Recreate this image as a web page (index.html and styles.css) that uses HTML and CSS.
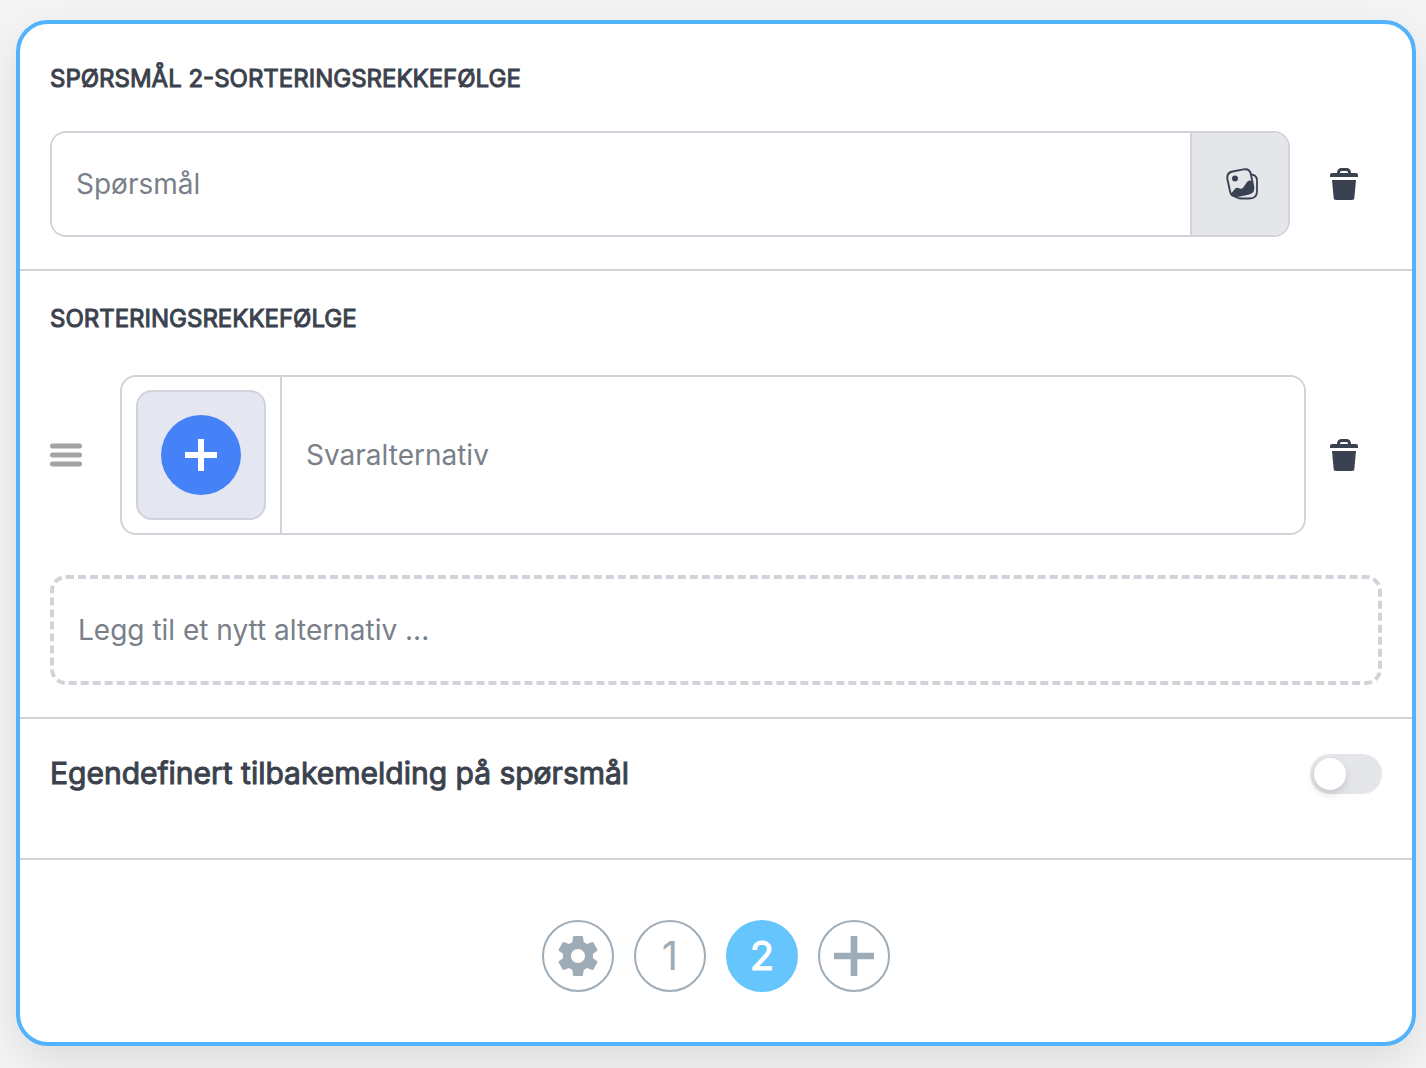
FILE: index.html
```html
<!DOCTYPE html>
<html lang="nb">
<head>
<meta charset="utf-8">
<meta name="viewport" content="width=device-width, initial-scale=1">
<title>Sorteringsrekkefølge</title>
<link rel="stylesheet" href="styles.css">
</head>
<body>
<svg class="sprite" aria-hidden="true">
  <symbol id="trash" viewBox="0 0 32 32">
    <path d="M10.500 6V4.500a3 3 0 0 1 3-3h5a3 3 0 0 1 3 3V6" fill="none" stroke="currentColor" stroke-width="3"/>
    <path d="M4 5h24a2 2 0 0 1 2 2v2H2V7a2 2 0 0 1 2-2zM4 12h24l-1.600 17.500a2.500 2.500 0 0 1-2.500 2.500H8.100a2.500 2.500 0 0 1-2.500-2.500z" fill="currentColor"/>
  </symbol>
</svg>
<main class="card">
  <section class="section section-question">
    <h2 class="heading"><label for="question">SPØRSMÅL 2-SORTERINGSREKKEFØLGE</label></h2>
    <div class="row question-row">
      <div class="group">
        <input class="field" id="question" type="text" placeholder="Spørsmål">
        <button class="media-button" type="button" aria-label="Legg til bilde">
          <svg class="icon" viewBox="0 0 32 32" aria-hidden="true">
            <path d="M25.500 6.500c3.500.5 5.500 2.500 5.500 6V23c0 5-2.500 7.500-7.500 7.500H15c-3 0-5-.8-6.500-2.500" fill="none" stroke="currentColor" stroke-width="1.800"/>
            <path d="M6.500 3.500 17.500 1.400c4.200-.8 6.600.8 7.400 4.900l2.300 12c.8 4.200-.8 6.700-4.900 7.500L11.500 28.100c-4.200.8-6.700-.8-7.500-4.900L1.500 11.500c-.8-4.300.8-7.200 5-8z" fill="none" stroke="currentColor" stroke-width="1.900"/>
            <circle cx="9" cy="10.500" r="3" fill="currentColor"/>
            <path d="M4.500 26.300 9.300 20.600c.9-1 2-1.200 3-.6l2.200.7c1 .2 1.800-.1 2.500-.9l4.500-6.200c1.200-1.600 3.500-1.600 5 0l1.200 5.500c.4 3-1 5.500-4 6.300l-13.500 2.800c-2.200.4-4.300-.2-5.700-1.900z" fill="currentColor"/>
          </svg>
        </button>
      </div>
      <button class="trash-button" type="button" aria-label="Slett spørsmål"><svg class="icon"><use href="#trash"/></svg></button>
    </div>
  </section>

  <section class="section section-answers">
    <h2 class="heading">SORTERINGSREKKEFØLGE</h2>
    <div class="row answer-row">
      <button class="handle" type="button" aria-label="Flytt">
        <svg class="icon" viewBox="0 0 32 32" aria-hidden="true"><path d="M2.500 7h27M2.500 16h27M2.500 25h27" stroke="currentColor" stroke-width="5" stroke-linecap="round"/></svg>
      </button>
      <div class="group">
        <div class="thumb-cell">
          <button class="thumb" type="button" aria-label="Legg til bilde">
            <span class="thumb-circle"><svg class="icon" viewBox="0 0 32 32"><path d="M0 16h32M16 0v32" stroke="currentColor" stroke-width="6"/></svg></span>
          </button>
        </div>
        <input class="field" type="text" placeholder="Svaralternativ" aria-label="Svaralternativ">
      </div>
      <button class="trash-button" type="button" aria-label="Slett alternativ"><svg class="icon"><use href="#trash"/></svg></button>
    </div>
    <input class="field field-new" type="text" placeholder="Legg til et nytt alternativ ..." aria-label="Legg til et nytt alternativ">
  </section>

  <section class="section section-feedback">
    <label class="feedback-label" for="feedback">Egendefinert tilbakemelding på spørsmål</label>
    <input class="toggle" id="feedback" type="checkbox" role="switch">
  </section>

  <nav class="pager" aria-label="Spørsmål">
    <button class="page" type="button" aria-label="Innstillinger">
      <svg class="page-icon" viewBox="2 2 20 20" aria-hidden="true"><path fill="currentColor" d="M19.430 12.980c.04-.32.07-.64.07-.98s-.03-.66-.07-.98l2.110-1.650c.19-.15.24-.42.12-.64l-2-3.460c-.12-.22-.39-.3-.61-.22l-2.490 1c-.52-.4-1.080-.73-1.690-.98l-.38-2.650C14.460 2.180 14.250 2 14 2h-4c-.25 0-.46.18-.49.42l-.38 2.650c-.61.25-1.170.59-1.690.98l-2.490-1c-.23-.09-.49 0-.61.22l-2 3.460c-.13.22-.07.49.12.64l2.110 1.650c-.04.32-.07.65-.07.98s.03.66.07.98l-2.110 1.650c-.19.15-.24.42-.12.64l2 3.460c.12.22.39.3.61.22l2.490-1c.52.4 1.080.73 1.690.98l.38 2.650c.03.24.24.42.49.42h4c.25 0 .46-.18.49-.42l.38-2.650c.61-.25 1.170-.59 1.690-.98l2.490 1c.23.09.49 0 .61-.22l2-3.460c.12-.22.07-.49-.12-.64l-2.110-1.650zM12 15.500c-1.930 0-3.500-1.570-3.500-3.500s1.570-3.500 3.500-3.500 3.500 1.570 3.500 3.500-1.570 3.500-3.500 3.500z"/></svg>
    </button>
    <button class="page page-number" type="button">1</button>
    <button class="page page-number page-current" type="button" aria-current="page">2</button>
    <button class="page" type="button" aria-label="Nytt spørsmål">
      <svg class="page-icon" viewBox="0 0 40 40" aria-hidden="true"><path d="M0 20h40M20 0v40" stroke="currentColor" stroke-width="6.600"/></svg>
    </button>
  </nav>
</main>
</body>
</html>
```
FILE: styles.css
```css
* { box-sizing: border-box; }

body {
  margin: 0;
  padding: 20px 10px 22px 16px;
  background: #f5f5f5;
  color: #3b424d;
  font-family: Inter, "Liberation Sans", sans-serif;
  overflow-x: hidden;
}

button {
  display: flex;
  align-items: center;
  justify-content: center;
  flex: none;
  margin: 0;
  padding: 0;
  border: 0;
  background: none;
  color: #3a4252;
  font: inherit;
  cursor: pointer;
}

.sprite { display: none; }

.icon {
  display: block;
  width: 32px;
  height: 32px;
}

.card {
  border: 4px solid #52b2fb;
  border-radius: 32px;
  background: #fff;
  box-shadow: 0 16px 48px rgba(0, 0, 0, 0.11);
}

.section {
  padding: 0 30px 32px;
  border-bottom: 2px solid #d0d4d9;
}

.section-question { padding-top: 37px; }
.section-answers { padding-top: 30px; }

.heading {
  margin: 0;
  font-size: 24px;
  font-weight: 400;
  line-height: 36px;
  -webkit-text-stroke: 1px currentColor;
}

.row {
  display: flex;
  align-items: center;
}

.question-row {
  gap: 16px;
  margin-top: 34px;
}

.answer-row { margin: 38px 0 40px; }

.group {
  display: flex;
  flex: 1;
  min-width: 0;
  overflow: hidden;
  border: 2px solid #d0d3d9;
  border-radius: 16px;
}

.field {
  flex: 1;
  min-width: 0;
  width: 100%;
  height: 102px;
  margin: 0;
  padding: 0 24px;
  border: 0;
  outline: 0;
  background: #fff;
  color: #3b424d;
  font: 400 28px Inter, "Liberation Sans", sans-serif;
}

.field::placeholder {
  color: #7a8089;
  opacity: 1;
}

.answer-row .field { height: 156px; }

.field-new {
  display: block;
  height: 110px;
  border: 4px dashed #d0d3d9;
  border-radius: 16px;
}

.media-button {
  width: 98px;
  padding-left: 4px;
  border-left: 2px solid #d0d3d9;
  background: #e4e6ea;
}

.trash-button {
  width: 76px;
  height: 76px;
}

.handle {
  width: 32px;
  margin-right: 38px;
  color: #a3a3a3;
}

.thumb-cell {
  display: flex;
  align-items: center;
  justify-content: center;
  width: 160px;
  border-right: 2px solid #d0d3d9;
}

.thumb {
  width: 130px;
  height: 130px;
  border: 2px solid #d0d3d9;
  border-radius: 16px;
  background: #e4e7f2;
}

.thumb-circle {
  display: flex;
  align-items: center;
  justify-content: center;
  width: 80px;
  height: 80px;
  border-radius: 50%;
  background: #4582f7;
  color: #fff;
}

.section-feedback {
  display: flex;
  align-items: flex-start;
  justify-content: space-between;
  padding-top: 35px;
  padding-bottom: 64px;
}

.feedback-label {
  font-size: 30px;
  line-height: 38px;
  -webkit-text-stroke: 1px currentColor;
}

.toggle {
  appearance: none;
  flex: none;
  width: 72px;
  height: 40px;
  margin: 0;
  padding: 4px;
  border-radius: 20px;
  background: #e5e6ea;
  cursor: pointer;
}

.toggle::before {
  content: "";
  display: block;
  width: 32px;
  height: 32px;
  border-radius: 50%;
  background: #fff;
  box-shadow: 0 4px 8px rgba(0, 0, 0, 0.14);
}

.toggle:checked { background: #66c5fc; }
.toggle:checked::before { margin-left: 32px; }

.pager {
  display: flex;
  justify-content: center;
  gap: 20px;
  padding: 60px 30px 50px;
}

.page {
  width: 72px;
  height: 72px;
  border: 2px solid #9eacb8;
  border-radius: 50%;
  color: #9eacb8;
}

.page-number {
  padding-bottom: 2px;
  font-size: 40px;
}

.page-icon {
  display: block;
  width: 40px;
  height: 40px;
}

.page-current {
  border-color: #66c5fc;
  background: #66c5fc;
  color: #fff;
  -webkit-text-stroke: 1px currentColor;
}
```
